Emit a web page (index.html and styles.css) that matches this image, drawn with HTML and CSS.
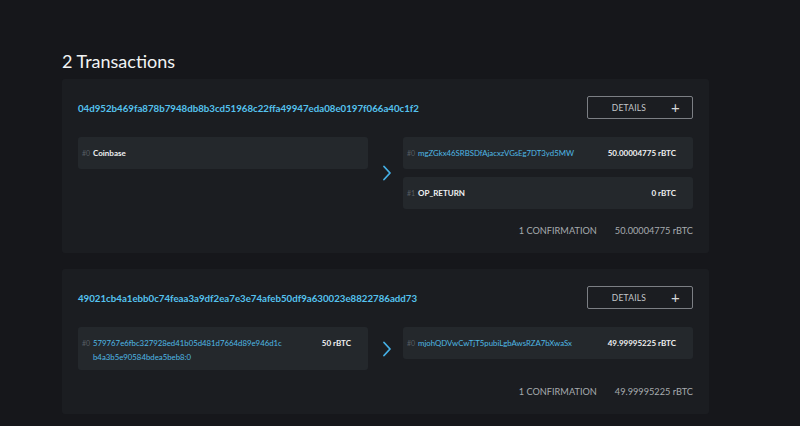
FILE: index.html
```html
<!DOCTYPE html>
<html>
<head>
<meta charset="utf-8">
<link rel="stylesheet" href="styles.css">
</head>
<body>
<main class="page">
  <h1 class="title">2 Transactions</h1>

  <section class="tx">
    <div class="tx-head">
      <a class="tx-hash">04d952b469fa878b7948db8b3cd51968c22ffa49947eda08e0197f066a40c1f2</a>
      <button class="details">DETAILS <span class="plus">+</span></button>
    </div>
    <div class="tx-body">
      <div class="col">
        <div class="io">
          <span class="idx">#0</span>
          <span class="plain">Coinbase</span>
        </div>
      </div>
      <div class="arrow">
        <svg width="10" height="16" viewBox="0 0 10 16"><path d="M2 1.5 L8 8 L2 14.5" fill="none" stroke="#45b0e6" stroke-width="1.8" stroke-linecap="round" stroke-linejoin="round"/></svg>
      </div>
      <div class="col">
        <div class="io">
          <span class="idx">#0</span>
          <a class="addr">mgZGkx46SRBSDfAjacxzVGsEg7DT3yd5MW</a>
          <span class="amt">50.00004775 rBTC</span>
        </div>
        <div class="io">
          <span class="idx">#1</span>
          <span class="plain">OP_RETURN</span>
          <span class="amt">0 rBTC</span>
        </div>
      </div>
    </div>
    <div class="tx-foot">
      <span class="conf">1 CONFIRMATION</span>
      <span class="total">50.00004775 rBTC</span>
    </div>
  </section>

  <section class="tx">
    <div class="tx-head">
      <a class="tx-hash">49021cb4a1ebb0c74feaa3a9df2ea7e3e74afeb50df9a630023e8822786add73</a>
      <button class="details">DETAILS <span class="plus">+</span></button>
    </div>
    <div class="tx-body">
      <div class="col">
        <div class="io">
          <span class="idx">#0</span>
          <a class="addr wrap">579767e6fbc327928ed41b05d481d7664d89e946d1c b4a3b5e90584bdea5beb8:0</a>
          <span class="amt">50 rBTC</span>
        </div>
      </div>
      <div class="arrow">
        <svg width="10" height="16" viewBox="0 0 10 16"><path d="M2 1.5 L8 8 L2 14.5" fill="none" stroke="#45b0e6" stroke-width="1.8" stroke-linecap="round" stroke-linejoin="round"/></svg>
      </div>
      <div class="col">
        <div class="io">
          <span class="idx">#0</span>
          <a class="addr">mjohQDVwCwTjT5pubiLgbAwsRZA7bXwaSx</a>
          <span class="amt">49.99995225 rBTC</span>
        </div>
      </div>
    </div>
    <div class="tx-foot">
      <span class="conf">1 CONFIRMATION</span>
      <span class="total">49.99995225 rBTC</span>
    </div>
  </section>
</main>
</body>
</html>
```

FILE: styles.css
```css
* { box-sizing: border-box; }

html, body {
  margin: 0;
  background: #16171b;
  font-family: "Lato", "Liberation Sans", sans-serif;
  color: #e6e8ea;
}

.page {
  width: 647px;
  margin-left: 62px;
  padding-top: 50px;
}

.title {
  margin: 0 0 7px 0;
  font-size: 18px;
  line-height: 22px;
  font-weight: 400;
  color: #f2f3f4;
}

.tx {
  background: #1b1d21;
  border-radius: 3px;
  padding: 17px 16px 0 16px;
  margin-bottom: 16px;
}

.tx-head {
  display: flex;
  align-items: center;
  justify-content: space-between;
  height: 23px;
}

.tx-hash {
  color: #55c3ef;
  font-size: 9.7px;
  font-weight: 700;
}

.details {
  width: 106px;
  height: 23px;
  background: #1b1d21;
  border: 1.5px solid #7c7f84;
  border-radius: 2px;
  color: #c4c7ca;
  font-family: inherit;
  font-size: 8.5px;
  letter-spacing: 0.2px;
  display: flex;
  align-items: center;
  justify-content: flex-end;
  padding: 0 12px 0 0;
  gap: 25px;
}

.plus {
  font-size: 15px;
  font-weight: 400;
  color: #d6d8da;
  line-height: 1;
}

.tx-body {
  display: flex;
  align-items: center;
  margin-top: 18px;
}

.col {
  width: 290px;
  display: flex;
  flex-direction: column;
  gap: 8px;
  align-self: flex-start;
}

.arrow {
  width: 35px;
  display: flex;
  justify-content: center;
  align-items: center;
  padding-left: 2px;
}

.io {
  background: #24282c;
  border-radius: 3px;
  min-height: 32px;
  padding: 9px 17px 6px 4px;
  display: flex;
  align-items: baseline;
  font-size: 8px;
  line-height: 14px;
}

.idx {
  font-size: 7px;
  color: #575d63;
  width: 11px;
  flex: none;
}

.plain {
  color: #f0f1f2;
  font-weight: 700;
  flex: 1;
}

.addr {
  color: #4fb8e4;
  font-size: 7.8px;
  flex: 1;
}

.addr.wrap {
  width: 220px;
  flex: none;
  margin-right: auto;
}

.amt {
  color: #f0f1f2;
  font-weight: 700;
  margin-left: auto;
  white-space: nowrap;
}

.tx-foot {
  display: flex;
  justify-content: flex-end;
  gap: 18px;
  padding: 14px 0 14px 0;
  font-size: 9.2px;
  line-height: 16px;
  color: #a7abaf;
}
```
